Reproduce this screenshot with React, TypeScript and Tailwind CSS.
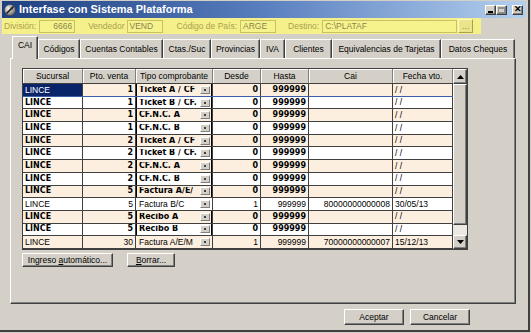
import React from "react";

type Row = { p: string; t: string; d: string; h: string; c: string; f: string; b: boolean };

const rows: Row[] = [
  { p: "1", t: "Ticket A / CF", d: "0", h: "999999", c: "", f: "/ /", b: true },
  { p: "1", t: "Ticket B / CF.", d: "0", h: "999999", c: "", f: "/ /", b: true },
  { p: "1", t: "CF.N.C. A", d: "0", h: "999999", c: "", f: "/ /", b: true },
  { p: "1", t: "CF.N.C. B", d: "0", h: "999999", c: "", f: "/ /", b: true },
  { p: "2", t: "Ticket A / CF", d: "0", h: "999999", c: "", f: "/ /", b: true },
  { p: "2", t: "Ticket B / CF.", d: "0", h: "999999", c: "", f: "/ /", b: true },
  { p: "2", t: "CF.N.C. A", d: "0", h: "999999", c: "", f: "/ /", b: true },
  { p: "2", t: "CF.N.C. B", d: "0", h: "999999", c: "", f: "/ /", b: true },
  { p: "5", t: "Factura A/E/", d: "0", h: "999999", c: "", f: "/ /", b: true },
  { p: "5", t: "Factura B/C", d: "1", h: "999999", c: "80000000000008", f: "30/05/13", b: false },
  { p: "5", t: "Recibo A", d: "0", h: "999999", c: "", f: "/ /", b: true },
  { p: "5", t: "Recibo B", d: "0", h: "999999", c: "", f: "/ /", b: true },
  { p: "30", t: "Factura A/E/M", d: "1", h: "999999", c: "70000000000007", f: "15/12/13", b: false },
];

const tabs: { label: string; w: string }[] = [
  { label: "Códigos", w: "w-[42px]" },
  { label: "Cuentas Contables", w: "w-[83px]" },
  { label: "Ctas./Suc", w: "w-[48px]" },
  { label: "Provincias", w: "w-[49px]" },
  { label: "IVA", w: "w-[25px]" },
  { label: "Clientes", w: "w-[47px]" },
  { label: "Equivalencias de Tarjetas", w: "w-[109px]" },
  { label: "Datos Cheques", w: "w-[74px]" },
];

const raised =
  "bg-[#d4d0c8] border border-t-white border-l-white border-r-[#404040] border-b-[#404040] shadow-[inset_-1px_-1px_0_#808080]";

function TitleBtn({ children }: { children: React.ReactNode }) {
  return (
    <div className={`w-[11px] h-[10px] ${raised} flex items-center justify-center text-black`}>{children}</div>
  );
}

function YLabel({ children, ml }: { children: React.ReactNode; ml: string }) {
  return <span className={`${ml} text-[#aaa24e] leading-none`}>{children}</span>;
}

function YInput({ children, w, ml, right }: { children: React.ReactNode; w: string; ml: string; right?: boolean }) {
  return (
    <div
      className={`${w} ${ml} h-[13px] border border-[#c9c165] bg-[#f7f38c] text-[#8a8450] flex items-center px-[2px] leading-none ${
        right ? "justify-end" : ""
      }`}
    >
      {children}
    </div>
  );
}

function HeadCell({ w, children }: { w: string; children: React.ReactNode }) {
  return (
    <div
      className={`${w} h-full shrink-0 flex items-center justify-center border-r border-r-[#808080] shadow-[inset_1px_1px_0_#ffffff] leading-none`}
    >
      {children}
    </div>
  );
}

export default function App() {
  return (
    <div className="w-[531px] h-[333px] bg-[#d4d0c8] font-['Liberation_Sans',Arial,sans-serif] text-[8.5px] text-black overflow-hidden">
      <div className="w-[530px] h-[332px] border-r-2 border-b-2 border-r-[#404040] border-b-[#404040] flex flex-col">
        {/* Title bar */}
        <div className="mx-[2px] mt-[1px] h-[17px] bg-linear-to-r from-[#1e3f80] via-[#5a7fbf] to-[#b4d0ee] flex items-center justify-between pl-[2px] pr-[3px]">
          <div className="flex items-center gap-[3px]">
            <svg width="12" height="12" viewBox="0 0 12 12">
              <defs>
                <radialGradient id="ic" cx="0.35" cy="0.35" r="0.7">
                  <stop offset="0" stopColor="#f0f0f0" />
                  <stop offset="1" stopColor="#707070" />
                </radialGradient>
              </defs>
              <circle cx="6" cy="6" r="5.5" fill="url(#ic)" stroke="#404040" strokeWidth="0.6" />
              <path d="M2.5 9.5 L9.5 2.5" stroke="#202020" strokeWidth="1.6" />
              <path d="M6 4 L9.8 2.2 L8 6 Z" fill="#303030" />
            </svg>
            <span className="text-white font-bold text-[11px] leading-none">Interfase con Sistema Plataforma</span>
          </div>
          <div className="flex items-center">
            <TitleBtn>
              <div className="w-[5px] h-[2px] bg-black mt-[4px] -ml-[1px]" />
            </TitleBtn>
            <TitleBtn>
              <div className="w-[7px] h-[6px] border border-[#909090] border-t-2" />
            </TitleBtn>
            <div className="w-[5px]" />
            <TitleBtn>
              <span className="font-bold text-[9px] leading-none">✕</span>
            </TitleBtn>
          </div>
        </div>

        {/* Yellow bar */}
        <div className="ml-[2px] w-[479px] h-[16px] bg-[#f5f08a] flex items-center">
          <YLabel ml="ml-[2px]">División:</YLabel>
          <YInput w="w-[36px]" ml="ml-[3px]" right>
            6666
          </YInput>
          <YLabel ml="ml-[13px]">Vendedor</YLabel>
          <YInput w="w-[36px]" ml="ml-[2px]">VEND</YInput>
          <YLabel ml="ml-[14px]">Código de País:</YLabel>
          <YInput w="w-[36px]" ml="ml-[3px]">ARGE</YInput>
          <YLabel ml="ml-[12px]">Destino:</YLabel>
          <YInput w="w-[135px]" ml="ml-[3px]">C:\PLATAF</YInput>
          <div className={`w-[15px] h-[14px] ml-[1px] bg-[#eae48a] border border-t-[#fffcc0] border-l-[#fffcc0] border-r-[#a8a050] border-b-[#a8a050] flex items-end justify-center pb-[2px] text-[#8a8450] leading-none`}>
            ...
          </div>
        </div>

        {/* Tabs */}
        <div className="ml-[12px] mt-[1px] h-[23px] flex items-end">
          <div className="relative z-10 w-[26px] h-[23px] -mb-[1px] bg-[#d4d0c8] border-t border-l border-t-white border-l-white border-r border-r-[#404040] shadow-[inset_-1px_0_0_#808080] flex items-start justify-center pt-[4px] leading-none">
            CAI
          </div>
          {tabs.map((t) => (
            <div
              key={t.label}
              className={`${t.w} h-[19px] shrink-0 border-t border-l border-t-white border-l-white border-r border-r-[#404040] shadow-[inset_-1px_0_0_#808080] flex items-center justify-center leading-none`}
            >
              {t.label}
            </div>
          ))}
        </div>

        {/* Panel */}
        <div className="ml-[10px] w-[506px] h-[246px] border border-t-white border-l-white border-r-[#404040] border-b-[#404040] shadow-[inset_-1px_-1px_0_#808080] pl-[11px] pt-[9px] flex flex-col">
          {/* Grid */}
          <div className="w-[446px] h-[182px] border border-[#404040] flex bg-white">
            <div className="flex flex-col w-[430px]">
              <div className="h-[15px] flex bg-[#d4d0c8] border-b border-b-[#404040]">
                <HeadCell w="w-[60px]">Sucursal</HeadCell>
                <HeadCell w="w-[53px]">Pto. venta</HeadCell>
                <HeadCell w="w-[77px]">Tipo comprobante</HeadCell>
                <HeadCell w="w-[48px]">Desde</HeadCell>
                <HeadCell w="w-[48px]">Hasta</HeadCell>
                <HeadCell w="w-[84px]">Cai</HeadCell>
                <HeadCell w="w-[60px]">Fecha vto.</HeadCell>
              </div>
              {rows.map((r, i) => {
                const bg = i % 2 === 0 ? "bg-[#fcefdf]" : "bg-white";
                const txt = r.b
                  ? "font-['DejaVu_Sans',sans-serif] font-bold text-[8px]"
                  : "font-['Liberation_Sans',Arial,sans-serif] text-[8.5px]";
                const bb = i === 0 ? "border-b-[#3d5fa8]" : "border-b-[#404040]";
                return (
                  <div key={i} className={`h-[12.7px] flex border-b ${bb} ${bg} leading-none whitespace-nowrap`}>
                    <div
                      className={`w-[60px] shrink-0 border-r border-r-[#404040] flex items-center px-[2px] ${
                        i === 0
                          ? "bg-[#0a246a] text-white font-['Liberation_Sans',Arial,sans-serif] text-[8.5px]"
                          : txt
                      }`}
                    >
                      LINCE
                    </div>
                    <div className={`w-[53px] shrink-0 border-r border-r-[#404040] flex items-center justify-end px-[2px] ${txt}`}>
                      {r.p}
                    </div>
                    <div
                      className={`w-[77px] shrink-0 border-r border-r-[#404040] flex items-center pl-[3px] pr-[2px] ${txt} ${
                        r.b ? "shadow-[inset_1px_0_0_#000,inset_-1px_0_0_#000]" : ""
                      }`}
                    >
                      <span className="flex-1 min-w-0 overflow-hidden">{r.t}</span>
                      <div className="w-[10px] h-[8px] shrink-0 bg-[#d4d0c8] border border-t-white border-l-white border-r-[#808080] border-b-[#808080] flex items-center justify-center">
                        <div className="w-[2px] h-[2px] bg-[#404040]" />
                      </div>
                    </div>
                    <div className={`w-[48px] shrink-0 border-r border-r-[#404040] flex items-center justify-end px-[2px] ${txt}`}>
                      {r.d}
                    </div>
                    <div className={`w-[48px] shrink-0 border-r border-r-[#404040] flex items-center justify-end px-[2px] ${txt}`}>
                      {r.h}
                    </div>
                    <div className="w-[84px] shrink-0 border-r border-r-[#404040] flex items-center justify-end px-[2px] text-[8.5px]">
                      {r.c}
                    </div>
                    <div className="w-[60px] shrink-0 border-r border-r-[#404040] flex items-center px-[2px] text-[8.5px]">
                      {r.f}
                    </div>
                  </div>
                );
              })}
            </div>
            {/* Scrollbar */}
            <div className="w-[14px] flex flex-col bg-[#ece9e2]">
              <div className={`h-[15px] ${raised} flex items-center justify-center`}>
                <svg width="7" height="4" viewBox="0 0 7 4">
                  <path d="M0 4 L3.5 0 L7 4 Z" fill="#000" />
                </svg>
              </div>
              <div className={`h-[141px] ${raised}`} />
              <div className="flex-1" />
              <div className={`h-[14px] ${raised} flex items-center justify-center`}>
                <svg width="7" height="4" viewBox="0 0 7 4">
                  <path d="M0 0 L3.5 4 L7 0 Z" fill="#000" />
                </svg>
              </div>
            </div>
          </div>

          {/* Grid buttons */}
          <div className="mt-[3px] flex items-center">
            <div className={`w-[91px] h-[14px] ${raised} flex items-center justify-center leading-none`}>
              <span>
                Ingreso <span className="underline">a</span>utomático...
              </span>
            </div>
            <div className={`ml-[14px] w-[48px] h-[14px] ${raised} flex items-center justify-center leading-none`}>
              <span>
                <span className="underline">B</span>orrar...
              </span>
            </div>
          </div>
        </div>

        {/* Bottom buttons */}
        <div className="mt-[5px] flex justify-end gap-[6px] pr-[58px]">
          <div className={`w-[60px] h-[16px] ${raised} flex items-center justify-center leading-none`}>Aceptar</div>
          <div className={`w-[60px] h-[16px] ${raised} flex items-center justify-center leading-none`}>Cancelar</div>
        </div>
      </div>
    </div>
  );
}
